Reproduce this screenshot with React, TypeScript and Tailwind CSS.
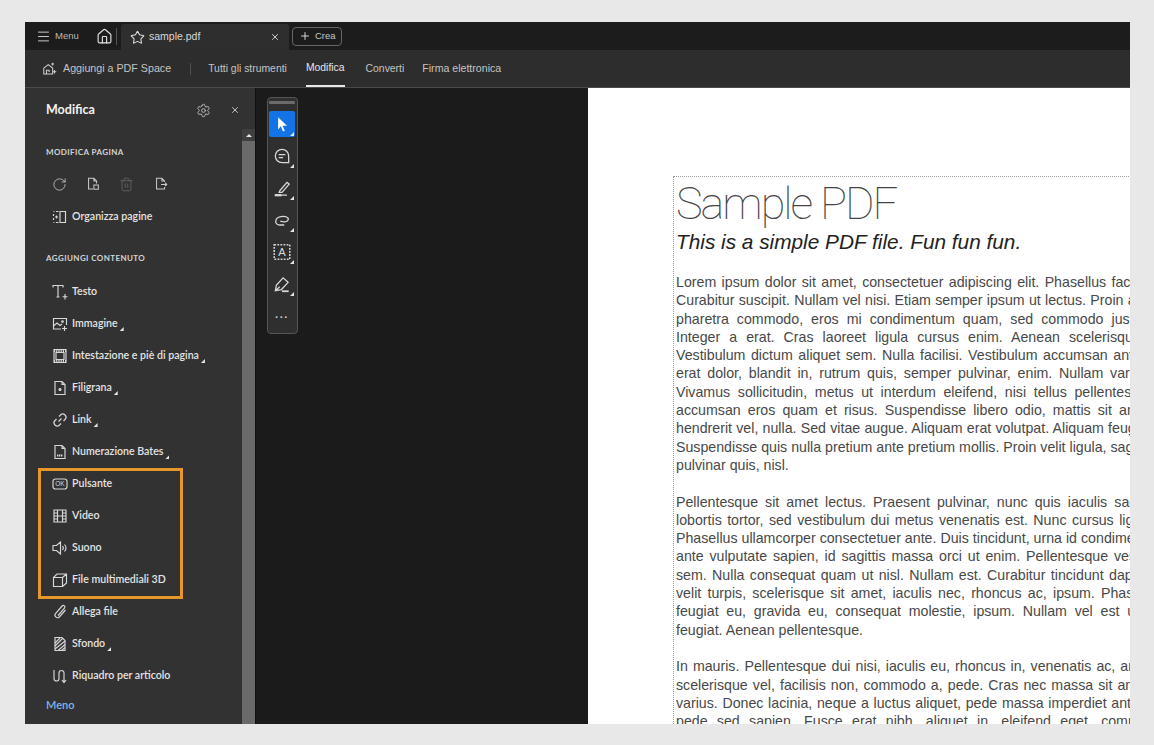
import type { ReactNode } from "react"
import { Menu, Home, Star, X, Plus, RotateCw, Settings, Trash2 } from "lucide-react"

function Ico({ children, className = "w-[18px] h-[18px]" }: { children: ReactNode; className?: string }) {
  return (
    <svg viewBox="0 0 18 18" fill="none" stroke="currentColor" strokeWidth="1.15" className={className}>
      {children}
    </svg>
  )
}

function Corner({ className = "" }: { className?: string }) {
  return <span className={`block w-1 h-1 bg-[#e6e6e6] [clip-path:polygon(100%_0,100%_100%,0_100%)] ${className}`} />
}

const page1 = <path d="M4 2.5h7l3 3v10H4z M11 2.5v3h3" />

const contentRows: { label: string; more?: boolean; icon: ReactNode }[] = [
  { label: "Testo", icon: <path d="M2 4.5V2.5h10v2M7 2.5v11.5M5.5 14h3M14 11v5.5M11.5 13.7h5" /> },
  { label: "Immagine", more: true, icon: <><path d="M10 14H2.5V3.5h13V10M2.5 11l3.5-3 3 2.5 2-1.5" /><circle cx="11.5" cy="6.5" r=".8" /><path d="M13.5 11v5M11 13.5h5" /></> },
  { label: "Intestazione e piè di pagina", more: true, icon: <><path d="M3 2.5h12v13H3zM5 5.5h8v7H5z" /><path d="M3 4h12M3 14h12" strokeDasharray="1.2 1" strokeWidth="2" /></> },
  { label: "Filigrana", more: true, icon: <>{page1}<circle cx="9" cy="10.5" r="1" fill="currentColor" /></> },
  { label: "Link", more: true, icon: <path d="M7.5 10.5l3-3M8 5.5l1.5-1.5a3 3 0 0 1 4.5 4.5L12.5 10M10 12.5L8.5 14A3 3 0 0 1 4 9.5L5.5 8" /> },
  { label: "Numerazione Bates", more: true, icon: <>{page1}<path d="M6 12.5h6" strokeWidth="2" strokeDasharray="1.3 .6" /></> },
  { label: "Pulsante", icon: <><rect x="2" y="4" width="14" height="10" rx="2.5" /><text x="9" y="11.2" fontSize="6.5" textAnchor="middle" fill="currentColor" stroke="none" fontFamily="Liberation Sans">OK</text></> },
  { label: "Video", icon: <path d="M3 3h12v12H3zM6.5 3v12M11.5 3v12M3 6h3.5M3 9h3.5M3 12h3.5M11.5 6H15M11.5 9H15M11.5 12H15M6.5 9h5" /> },
  { label: "Suono", icon: <path d="M2 6.5h3.5l4-3.5v12l-4-3.5H2zM11.5 7c1 1.2 1 2.8 0 4M13.5 5.5c1.7 2 1.7 5 0 7" /> },
  { label: "File multimediali 3D", icon: <path d="M2.5 6.5h9v9h-9zM2.5 6.5l3.5-3.5h9.5v9l-4 3.5M11.5 6.5l4-3.5" /> },
  { label: "Allega file", icon: <path d="M14.5 7l-6.2 7a2.6 2.6 0 0 1-3.8-3.5l6.6-7.5a1.6 1.6 0 0 1 2.4 2.2L7 12.5" /> },
  { label: "Sfondo", more: true, icon: <><path d="M4 2.5h7l3 3v10H4z" /><path d="M4 8l5-5M4 11l7.5-7.5M4 14l10-8M7 15.5l7-6M10.5 15.5l3.5-3" /></> },
  { label: "Riquadro per articolo", icon: <path d="M3 3v8.5a2.5 2.5 0 0 0 5 0V6a2.5 2.5 0 0 1 5 0v9M11 13l2 2.5 2-2.5" /> },
]

function SideRow({ label, more, icon }: { label: string; more?: boolean; icon: ReactNode }) {
  return (
    <div className="h-8 flex items-center pl-[26px]">
      <span className="w-[21px] text-[#d8d8d8]">{icon}</span>
      <span className="text-[10.6px] font-semibold text-[#e4e4e4]">{label}</span>
      {more && <Corner className="ml-0.5 mt-2.5" />}
    </div>
  )
}

function ToolBtn({ children, active }: { children: ReactNode; active?: boolean }) {
  return (
    <div className={`relative w-[26px] h-[26px] rounded-[2px] flex items-center justify-center text-[#d8d8d8] ${active ? "bg-[#1473e6]" : ""}`}>
      {children}
      <Corner className="absolute right-[1px] bottom-[1px]" />
    </div>
  )
}

const para1 = [
  "Lorem ipsum dolor sit amet, consectetuer adipiscing elit. Phasellus facilisis odio sed mi.",
  "Curabitur suscipit. Nullam vel nisi. Etiam semper ipsum ut lectus. Proin aliquam, erat eget",
  "pharetra commodo, eros mi condimentum quam, sed commodo justo quam ut velit.",
  "Integer a erat. Cras laoreet ligula cursus enim. Aenean scelerisque velit et tellus.",
  "Vestibulum dictum aliquet sem. Nulla facilisi. Vestibulum accumsan ante vitae elit. Nulla",
  "erat dolor, blandit in, rutrum quis, semper pulvinar, enim. Nullam varius congue risus.",
  "Vivamus sollicitudin, metus ut interdum eleifend, nisi tellus pellentesque elit, tristique",
  "accumsan eros quam et risus. Suspendisse libero odio, mattis sit amet, aliquet eget,",
  "hendrerit vel, nulla. Sed vitae augue. Aliquam erat volutpat. Aliquam feugiat vulputate nisl.",
  "Suspendisse quis nulla pretium ante pretium mollis. Proin velit ligula, sagittis at, egestas a,",
]
const para2 = [
  "Pellentesque sit amet lectus. Praesent pulvinar, nunc quis iaculis sagittis, justo quam",
  "lobortis tortor, sed vestibulum dui metus venenatis est. Nunc cursus ligula. Nulla facilisi.",
  "Phasellus ullamcorper consectetuer ante. Duis tincidunt, urna id condimentum luctus, nibh",
  "ante vulputate sapien, id sagittis massa orci ut enim. Pellentesque vestibulum convallis",
  "sem. Nulla consequat quam ut nisl. Nullam est. Curabitur tincidunt dapibus lorem. Proin",
  "velit turpis, scelerisque sit amet, iaculis nec, rhoncus ac, ipsum. Phasellus lorem arcu,",
  "feugiat eu, gravida eu, consequat molestie, ipsum. Nullam vel est ut ipsum volutpat",
]
const para3 = [
  "In mauris. Pellentesque dui nisi, iaculis eu, rhoncus in, venenatis ac, ante. Ut odio justo,",
  "scelerisque vel, facilisis non, commodo a, pede. Cras nec massa sit amet tortor volutpat",
  "varius. Donec lacinia, neque a luctus aliquet, pede massa imperdiet ante, at varius lorem",
  "pede sed sapien. Fusce erat nibh, aliquet in, eleifend eget, commodo eget, erat.",
]

function Para({ lines, last }: { lines: string[]; last?: string }) {
  return (
    <div className="mb-[18.3px]">
      {lines.map((l) => (
        <div key={l} className="whitespace-nowrap [text-align-last:justify]">
          {l}
        </div>
      ))}
      {last && <div>{last}</div>}
    </div>
  )
}

export default function App() {
  return (
    <div className="relative w-[1154px] h-[745px] bg-[#e8e8e8] pt-[22px] pl-[25px] overflow-hidden font-['Liberation_Sans',sans-serif]">
      <div className="w-[1105px] h-[702px] flex flex-col overflow-hidden bg-[#1b1b1b]">
        {/* top bar */}
        <div className="h-7 shrink-0 flex items-end bg-[#1c1c1c] text-[#c8c8c8]">
          <div className="h-7 flex items-center w-[93px] pl-[11px]">
            <Menu size={15} strokeWidth={1.6} />
            <span className="ml-[4px] text-[9.5px] text-[#b8b8b8]">Menu</span>
          </div>
          <div className="h-7 flex items-center">
            <Home size={17} strokeWidth={1.6} className="text-[#e2e2e2] -ml-[22px] mr-[3px]" />
            <span className="w-px h-[17px] bg-[#555]" />
          </div>
          <div className="ml-[3px] h-[26px] w-[168px] bg-[#2e2e2e] rounded-t-[3px] flex items-center pl-[9px] pr-[8px]">
            <Star size={15} strokeWidth={1.7} className="text-[#ddd]" />
            <span className="ml-[4px] text-[10.5px] text-[#d8d8d8]">sample.pdf</span>
            <X size={10} strokeWidth={2.2} className="ml-auto mr-[1px] text-[#ddd]" />
          </div>
          <div className="h-7 flex items-center ml-[3px]">
            <div className="h-[19px] w-[50px] border border-[#666] rounded-[4px] flex items-center pl-[6px] text-[#c8c8c8]">
              <Plus size={12} strokeWidth={1.7} className="text-[#eee]" />
              <span className="ml-[4px] text-[9.5px]">Crea</span>
            </div>
          </div>
        </div>
        {/* tool bar */}
        <div className="h-[38px] shrink-0 flex items-center bg-[#2d2d2d] border-b border-[#4a4a4a] text-[10.4px] text-[#c4c4c4]">
          <span className="ml-[17px] text-[#cfcfcf]">
            <Ico className="w-4 h-4">
              <path d="M2 8l5-4 5 4v6.5H2zM5 14.5v-4h3v2" />
              <path d="M12 2v3M10.5 3.5h3M14 10v4M12 12h4" />
            </Ico>
          </span>
          <span className="ml-[5px] text-[10.7px]">Aggiungi a PDF Space</span>
          <span className="ml-[19px] w-px h-3 bg-[#4f4f4f]" />
          <span className="ml-[17px]">Tutti gli strumenti</span>
          <span className="ml-[19px] h-full flex items-center border-b-2 border-[#e8e8e8] text-[#e6e6e6]">Modifica</span>
          <span className="ml-[21px]">Converti</span>
          <span className="ml-[18px] text-[10.6px]">Firma elettronica</span>
        </div>
        {/* main */}
        <div className="flex-1 min-h-0 flex">
          <aside className="w-[230px] shrink-0 flex bg-[#323232] font-['Lato',sans-serif]">
            <div className="flex-1 min-w-0 flex flex-col">
              <div className="h-[44px] shrink-0 flex items-center pl-[21px] pr-[2px]">
                <span className="text-[12.5px] font-bold text-[#f2f2f2]">Modifica</span>
                <Settings size={15} strokeWidth={1.3} className="ml-auto text-[#cfcfcf]" />
                <X size={10} strokeWidth={2} className="ml-[19px] text-[#ddd]" />
              </div>
              <div className="mt-[13px] pl-[21px] text-[8px] leading-[14px] font-bold tracking-[0.05em] text-[#d4d4d4]">MODIFICA PAGINA</div>
              <div className="mt-[16px] h-[18px] pl-[27px] flex items-center text-[#c9c9c9]">
                <RotateCw size={15} strokeWidth={1.3} />
                <span className="ml-[18px]">
                  <Ico className="w-4 h-4"><path d="M9 14.5H4v-12h6l3 3v3M10 2.5v3h3M10 10h5v5h-5z" /></Ico>
                </span>
                <Trash2 size={15} strokeWidth={1.1} className="ml-[18px] text-[#6f6f6f]" />
                <span className="ml-[19px]">
                  <Ico className="w-4 h-4"><path d="M13 6.5v-1l-3-3H4v12h9v-2M10 2.5v3h3M9 9.5h6.5M13.5 7.5l2 2-2 2" /></Ico>
                </span>
              </div>
              <div className="mt-[8px]">
                <SideRow
                  label="Organizza pagine"
                  icon={<Ico><path d="M9 3.5h5.5v11H9zM5 3.5h2.5M2.5 6v2M2.5 10v2M5 14.5h2.5M2.5 3.5h1M2.5 14.5h1" /><path d="M4 9h3M5.5 7.5V10.5" /></Ico>}
                />
              </div>
              <div className="mt-[18px] mb-[11px] pl-[21px] text-[8px] leading-[14px] font-bold tracking-[0.05em] text-[#d4d4d4]">AGGIUNGI CONTENUTO</div>
              {contentRows.map((r) => (
                <SideRow key={r.label} label={r.label} more={r.more} icon={<Ico>{r.icon}</Ico>} />
              ))}
              <div className="mt-[5px] pl-[21px] text-[11px] font-semibold text-[#7fb5ea]">Meno</div>
            </div>
            <div className="w-[13px] shrink-0 flex flex-col pt-[41px]">
              <div className="h-3 bg-[#3f3f3f] flex items-center justify-center">
                <span className="w-0 h-0 border-x-[3px] border-x-transparent border-b-[3px] border-b-[#e6e6e6]" />
              </div>
              <div className="flex-1 bg-[#6a6a6a]" />
            </div>
          </aside>
          <div className="w-px bg-[#111]" />
          {/* canvas */}
          <div className="w-[332px] shrink-0 bg-[#1b1b1b] pl-[11px] pt-[9px]">
            <div className="w-[31px] h-[237px] rounded-[4px] border border-[#555] bg-[#2f2f2f] flex flex-col items-start pl-px gap-[6px] pt-[3px]">
              <div className="w-[26px] h-[3px] bg-[#6b6b6b] rounded-[1px] mb-px" />
              <ToolBtn active>
                <svg viewBox="0 0 18 18" className="w-[20px] h-[20px] text-white" fill="currentColor"><path d="M5.5 3l8 7.5H9.5l2 4.5-1.6.7-2-4.6L5.5 14z" /></svg>
              </ToolBtn>
              <ToolBtn>
                <Ico className="w-5 h-5"><path d="M9 3a6 6 0 1 0 0 12h6v-6a6 6 0 0 0-6-6z" /><path d="M6 7.8h6M6 10.5h4" /></Ico>
              </ToolBtn>
              <ToolBtn>
                <Ico className="w-5 h-5"><path d="M7 11.5l6.5-7.5 2 1.5-6.5 7.5H6.5zM2.5 15.5h11" /><path d="M2.5 15.5h6" strokeWidth="2" /></Ico>
              </ToolBtn>
              <ToolBtn>
                <Ico className="w-5 h-5"><path d="M11 13.5H7c-5 0-5-6.5 1-7.5 4-.7 7.5.5 6.5 3-.8 2-4.5 2-7 1" /></Ico>
              </ToolBtn>
              <ToolBtn>
                <svg viewBox="0 0 18 18" className="w-5 h-5" fill="none" stroke="currentColor">
                  <rect x="2" y="2.5" width="14" height="13" strokeDasharray="1.6 1.2" strokeWidth="1.4" />
                  <text x="9" y="13" fontSize="10" textAnchor="middle" fill="currentColor" stroke="none" fontFamily="Liberation Sans">A</text>
                </svg>
              </ToolBtn>
              <ToolBtn>
                <Ico className="w-5 h-5"><path d="M3 15l1-5 6-6.5 4.5 4-6 6.5zM3 15l4-3.5M10 3.5l4.5 4" /><path d="M9 15.5h6" strokeWidth="1.6" /></Ico>
              </ToolBtn>
              <div className="w-[26px] text-center text-[#cfcfcf] text-[11px] tracking-[1px] leading-none mt-[9px] font-bold">···</div>
            </div>
          </div>
          {/* page */}
          <div className="flex-1 min-w-0 bg-white overflow-hidden pl-[85px] pt-[88px]">
            <div className="w-[640px] pl-[2px] border-l border-t border-dotted border-[#9a9a9a]">
              <div className="w-[566px]">
                <div className="font-['Roboto',sans-serif] font-thin text-[45px] tracking-[-2px] leading-[50px] text-[#444] mt-[2px]">Sample PDF</div>
                <div className="italic text-[20.8px] leading-[26px] text-[#222]">This is a simple PDF file. Fun fun fun.</div>
                <div className="mt-[18px] text-[14.2px] leading-[18.3px] text-[#484848]">
                  <Para lines={para1} last="pulvinar quis, nisl." />
                  <Para lines={para2} last="feugiat. Aenean pellentesque." />
                  <Para lines={para3} />
                </div>
              </div>
            </div>
          </div>
        </div>
      </div>
      {/* highlight box over the tool list */}
      <div className="absolute left-[38px] top-[468px] w-[145px] h-[131px] border-[3px] border-[#e8982a]" />
    </div>
  )
}
